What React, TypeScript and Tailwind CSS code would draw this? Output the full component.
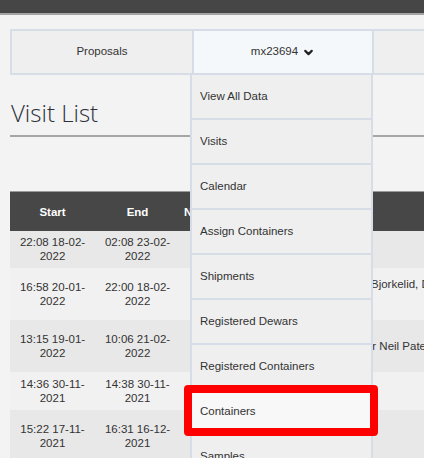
import React from "react";
import { ChevronDown } from "lucide-react";

const menu = [
  "View All Data",
  "Visits",
  "Calendar",
  "Assign Containers",
  "Shipments",
  "Registered Dewars",
  "Registered Containers",
  "Containers",
  "Samples",
];

const rows = [
  { s: "22:08 18-02-2022", e: "02:08 23-02-2022", n: "", h: "h-[37px]", bg: "bg-[#e8e8e8]", pad: "", top: false },
  { s: "16:58 20-01-2022", e: "22:00 18-02-2022", n: "Bjorkelid, David Aragao", h: "h-[52px]", bg: "bg-[#f1f1f1]", pad: "pl-[191px]", top: true },
  { s: "13:15 19-01-2022", e: "10:06 21-02-2022", n: "Dr Neil Paterson", h: "h-[52px]", bg: "bg-[#e8e8e8]", pad: "pl-[184px]", top: false },
  { s: "14:36 30-11-2021", e: "14:38 30-11-2021", n: "", h: "h-[38px]", bg: "bg-[#f1f1f1]", pad: "", top: false },
  { s: "15:22 17-11-2021", e: "16:31 16-12-2021", n: "", h: "h-[52px]", bg: "bg-[#e8e8e8]", pad: "", top: false },
];

export default function App() {
  return (
    <div
      className="relative w-[424px] h-[458px] overflow-hidden bg-[#f3f3f3] text-[#333]"
      style={{ fontFamily: '"Liberation Sans", Arial, sans-serif' }}
    >
      <div className="h-[13px] bg-[#464646]" />
      <div className="h-[2px] bg-[#a3a3a3]" />

      <div className="px-[10px] pt-[14px]">
        {/* nav */}
        <div className="relative w-[640px]">
          <div className="flex h-[46px] border-2 border-[#d6dde7] text-[11.5px]">
            <div className="w-[180px] shrink-0 flex items-center justify-center bg-[#efefef]">
              Proposals
            </div>
            <div className="w-[182px] shrink-0 flex items-center justify-center gap-[4px] bg-[#f5f8fb] border-l-2 border-r-2 border-[#d6dde7]">
              <span>mx23694</span>
              <ChevronDown size={13} strokeWidth={4} className="text-[#222] mt-[1px]" />
            </div>
            <div className="flex-1 bg-[#efefef]" />
          </div>

          {/* dropdown menu */}
          <div className="absolute left-[180px] top-[46px] z-10 w-[183px] border-l-2 border-r-2 border-[#d6dde7] text-[11.5px] text-[#333]">
            {menu.map((m) => (
              <div
                key={m}
                className={`h-[45px] flex items-center pl-[8px] border-b-2 border-[#d6dde7] ${
                  m === "Containers" ? "bg-[#f8f8f8]" : "bg-[#efefef]"
                }`}
              >
                {m}
              </div>
            ))}
          </div>
        </div>

        <h1
          className="mt-[24px] text-[24px] leading-[28px] font-light text-[#2d3038] pl-[1px]"
          style={{ fontFamily: '"Open Sans", sans-serif' }}
        >
          Visit List
        </h1>
        <div className="mt-[8px] h-[2px] w-[640px] bg-[#a6a6a6]" />

        <div className="mt-[54px] w-[640px]">
          <table className="w-[640px] border-collapse text-[11.5px] leading-[14px] table-fixed">
            <colgroup>
              <col className="w-[85px]" />
              <col className="w-[85px]" />
              <col />
            </colgroup>
            <thead>
              <tr className="h-[39px] bg-[#474747] text-white font-bold border-t border-[#9a9a9a]">
                <th className="text-center pt-[1px]">Start</th>
                <th className="text-center pt-[1px]">End</th>
                <th className="text-left pl-[4px] pt-[1px]">Name</th>
              </tr>
            </thead>
            <tbody>
              {rows.map((r, i) => (
                <tr key={i} className={`${r.h} ${r.bg}`}>
                  <td className="text-center align-middle px-[8px]">{r.s}</td>
                  <td className="text-center align-middle px-[8px]">{r.e}</td>
                  <td className={`text-left whitespace-nowrap overflow-hidden ${r.top ? "align-top pt-[9px]" : "align-middle"}`}>
                    <div className={r.pad}>{r.n}</div>
                  </td>
                </tr>
              ))}
            </tbody>
          </table>
        </div>
      </div>

      {/* annotation */}
      <div className="absolute left-[184px] top-[385px] w-[194px] h-[51px] border-[8px] border-[#ff0000] rounded-[4px] z-20" />
    </div>
  );
}
